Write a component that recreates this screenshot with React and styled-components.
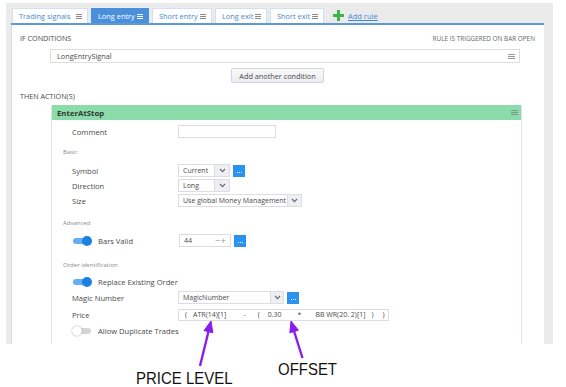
import styled, { createGlobalStyle } from 'styled-components';

const GlobalStyle = createGlobalStyle`
  html, body {
    margin: 0;
    background: #fff;
  }
  body {
    font-family: "Open Sans", "Noto Sans", sans-serif;
    font-weight: 400;
    color: #4a4a4a;
  }
`;

const Page = styled.div`
  position: relative;
  width: 566px;
  height: 387px;
  overflow: hidden;
`;

const Frame = styled.div`
  margin: 3px 0 0 6px;
  width: 547px;
  height: 341px;
  background: #ebebeb;
  padding: 5px 9px 0 5px;
  box-sizing: border-box;
  display: flex;
  flex-direction: column;
  overflow: hidden;
`;

const TabBar = styled.div`
  display: flex;
  align-items: stretch;
  gap: 3px;
  height: 15px;
  padding-left: 1px;
  border-bottom: 2px solid #5d9ad6;
`;

const Tab = styled.div`
  display: flex;
  align-items: center;
  padding: 0 5px 0 6px;
  font-size: 7.4px;
  background: ${p => (p.$active ? '#4a8fdc' : '#fff')};
  color: ${p => (p.$active ? '#fff' : '#4a87cc')};
  border: 1px solid ${p => (p.$active ? '#4a8fdc' : '#cfe0f1')};
  border-bottom: none;
  box-sizing: border-box;
  width: ${p => p.$w}px;
  white-space: nowrap;
`;

const Burger = styled.span`
  display: inline-block;
  flex-shrink: 0;
  width: ${p => p.$w || 6}px;
  height: 5px;
  margin-left: auto;
  background: linear-gradient(
    ${p => p.$c || '#888'} 0 1px,
    transparent 1px 2px,
    ${p => p.$c || '#888'} 2px 3px,
    transparent 3px 4px,
    ${p => p.$c || '#888'} 4px 5px
  );
`;

const AddRule = styled.div`
  display: flex;
  align-items: center;
  gap: 4px;
  margin-left: 6px;
  font-size: 7.5px;
  color: #3f86d6;
  text-decoration: underline;
`;

const Panel = styled.div`
  flex: 1;
  background: #fff;
  border-left: 1px solid #dcdcdc;
  padding: 8px 9px 0 8px;
  display: flex;
  flex-direction: column;
  overflow: hidden;
`;

const HeadRow = styled.div`
  display: flex;
  justify-content: space-between;
  align-items: center;
  height: 10px;
  margin-top: ${p => p.$mt || 0}px;
  font-size: 7.2px;
`;

const Note = styled.span`
  font-size: 6.4px;
  color: #666;
`;

const ConditionBox = styled.div`
  margin: 6px 0 0 30px;
  width: 470px;
  height: 14px;
  box-sizing: border-box;
  border: 1px solid #dedede;
  display: flex;
  align-items: center;
  padding: 0 4px 0 6px;
  font-size: 7.3px;
`;

const AddButton = styled.button`
  align-self: center;
  margin-top: 5px;
  height: 15px;
  width: 93px;
  padding: 0;
  font-family: inherit;
  font-weight: 400;
  font-size: 7.3px;
  color: #4a4a4a;
  background: linear-gradient(#fafafa, #ececf2);
  border: 1px solid #d4d4dc;
  border-radius: 2px;
`;

const ActionBox = styled.div`
  margin: 4px 0 0 31px;
  width: 469px;
  flex: 1;
  border-left: 1px solid #e2e2ee;
  border-right: 1px solid #e2e2ee;
  display: flex;
  flex-direction: column;
`;

const ActionHeader = styled.div`
  height: 15px;
  background: #8cdca9;
  display: flex;
  align-items: center;
  padding: 0 3px 0 5px;
  font-size: 7.8px;
  font-weight: 700;
  color: #2e3a33;
`;

const ActionBody = styled.div`
  padding-left: 20px;
  display: flex;
  flex-direction: column;
`;

const Section = styled.div`
  margin: ${p => p.$mt}px 0 0 -9px;
  height: 10px;
  line-height: 10px;
  font-size: 6px;
  color: #8a8a8a;
`;

const Row = styled.div`
  display: flex;
  align-items: center;
  height: ${p => p.$h || 13}px;
  margin-top: ${p => p.$mt || 0}px;
`;

const Label = styled.span`
  width: 106px;
  flex-shrink: 0;
  font-size: 7.6px;
`;

const ToggleLabel = styled.span`
  display: flex;
  align-items: center;
  gap: 7px;
  width: ${p => (p.$wide ? 'auto' : '106px')};
  flex-shrink: 0;
  padding-left: 1px;
  font-size: 7.6px;
`;

const Toggle = styled.span`
  position: relative;
  width: 18px;
  height: 6px;
  border-radius: 3px;
  background: ${p => (p.$on ? '#66aef4' : '#d6d6d6')};
  &::after {
    content: '';
    position: absolute;
    top: -2px;
    left: ${p => (p.$on ? '9px' : '-1px')};
    width: 10px;
    height: 10px;
    border-radius: 50%;
    background: ${p => (p.$on ? '#1b80e2' : '#fff')};
    box-shadow: ${p => (p.$on ? 'none' : '0 0 1.5px rgba(0,0,0,0.45)')};
  }
`;

const Field = styled.div`
  display: flex;
  align-items: center;
  width: ${p => p.$w}px;
  height: ${p => p.$h || 13}px;
  box-sizing: border-box;
  border: 1px solid #dcdce2;
  background: #fff;
  font-size: 7px;
  padding-left: ${p => p.$pl ?? 4}px;
  overflow: hidden;
  white-space: nowrap;
`;

const FieldText = styled.span`
  flex: 1;
  overflow: hidden;
`;

const Arrow = styled.span`
  display: flex;
  flex-shrink: 0;
  align-items: center;
  justify-content: center;
  align-self: stretch;
  width: ${p => p.$w || 14}px;
  background: #eeeef5;
  border-left: 1px solid #dcdce2;
`;

const Stepper = styled.span`
  color: #9a9a9a;
  font-size: 9px;
  letter-spacing: 1px;
  margin-right: 3px;
`;

const DotsButton = styled.span`
  display: flex;
  align-items: flex-end;
  justify-content: center;
  gap: 1px;
  width: 12px;
  height: 12px;
  margin-left: 3px;
  padding-bottom: 4px;
  box-sizing: border-box;
  background: #2a93f2;
`;

const Dot = styled.i`
  width: 1px;
  height: 1px;
  background: #fff;
`;

const Expr = styled.span`
  margin-left: ${p => p.$ml}px;
`;

const Notes = styled.div`
  display: flex;
  align-items: flex-start;
  padding-left: 136px;
  font-family: "Liberation Sans", Arial, sans-serif;
  color: #111;
`;

const Callout = styled.span`
  display: inline-block;
  margin-top: ${p => p.$mt}px;
  margin-left: ${p => p.$ml || 0}px;
  font-size: 17px;
  line-height: 17px;
  transform: scaleX(0.88);
  transform-origin: left center;
  white-space: nowrap;
`;

const Overlay = styled.svg`
  position: absolute;
  left: 0;
  top: 0;
  pointer-events: none;
`;

const Chevron = () => (
  <svg width="7" height="5" viewBox="0 0 7 5">
    <path d="M1 1 L3.5 3.6 L6 1" fill="none" stroke="#666" strokeWidth="1.1" />
  </svg>
);

const Plus = () => (
  <svg width="11" height="11" viewBox="0 0 11 11">
    <path d="M4 0h3v4h4v3H7v4H4V7H0V4h4z" fill="#3cb54a" />
  </svg>
);

const Dots = () => (
  <DotsButton>
    <Dot />
    <Dot />
    <Dot />
  </DotsButton>
);

const tabs = [
  { name: 'Trading signals', w: 76 },
  { name: 'Long entry', w: 58, active: true },
  { name: 'Short entry', w: 60 },
  { name: 'Long exit', w: 52 },
  { name: 'Short exit', w: 54 },
];

export default function App() {
  return (
    <Page>
      <GlobalStyle />
      <Frame>
        <TabBar>
          {tabs.map(t => (
            <Tab key={t.name} $active={t.active} $w={t.w}>
              {t.name}
              <Burger $c={t.active ? '#fff' : '#8a8a8a'} />
            </Tab>
          ))}
          <AddRule>
            <Plus />
            Add rule
          </AddRule>
        </TabBar>
        <Panel>
          <HeadRow>
            IF CONDITIONS
            <Note>RULE IS TRIGGERED ON BAR OPEN</Note>
          </HeadRow>
          <ConditionBox>
            <FieldText>LongEntrySignal</FieldText>
            <Burger $w={7} $c="#999" />
          </ConditionBox>
          <AddButton>Add another condition</AddButton>
          <HeadRow $mt={8}>THEN ACTION(S)</HeadRow>
          <ActionBox>
            <ActionHeader>
              EnterAtStop
              <Burger $w={7} $c="#7d9a88" />
            </ActionHeader>
            <ActionBody>
              <Row $mt={5}>
                <Label>Comment</Label>
                <Field $w={98} />
              </Row>
              <Section $mt={9}>Basic</Section>
              <Row $mt={7}>
                <Label>Symbol</Label>
                <Field $w={52}>
                  <FieldText>Current</FieldText>
                  <Arrow><Chevron /></Arrow>
                </Field>
                <Dots />
              </Row>
              <Row $mt={2}>
                <Label>Direction</Label>
                <Field $w={52}>
                  <FieldText>Long</FieldText>
                  <Arrow><Chevron /></Arrow>
                </Field>
              </Row>
              <Row $mt={2}>
                <Label>Size</Label>
                <Field $w={124}>
                  <FieldText>Use global Money Management</FieldText>
                  <Arrow $w={13}><Chevron /></Arrow>
                </Field>
              </Row>
              <Section $mt={11}>Advanced</Section>
              <Row $mt={6}>
                <ToggleLabel>
                  <Toggle $on />
                  Bars Valid
                </ToggleLabel>
                <Field $w={52}>
                  <FieldText>44</FieldText>
                  <Stepper>−+</Stepper>
                </Field>
                <Dots />
              </Row>
              <Section $mt={13}>Order identification</Section>
              <Row $mt={5}>
                <ToggleLabel $wide>
                  <Toggle $on />
                  Replace Existing Order
                </ToggleLabel>
              </Row>
              <Row $mt={3}>
                <Label>Magic Number</Label>
                <Field $w={106}>
                  <FieldText>MagicNumber</FieldText>
                  <Arrow $w={12}><Chevron /></Arrow>
                </Field>
                <Dots />
              </Row>
              <Row $mt={4}>
                <Label>Price</Label>
                <Field $w={211} $h={12} $pl={0}>
                  <Expr $ml={6}>(</Expr>
                  <Expr $ml={6}>ATR(14)[1]</Expr>
                  <Expr $ml={17}>-</Expr>
                  <Expr $ml={12}>(</Expr>
                  <Expr $ml={8}>0.30</Expr>
                  <Expr $ml={16}>*</Expr>
                  <Expr $ml={14}>BB WR(20. 2)[1]</Expr>
                  <Expr $ml={6}>)</Expr>
                  <Expr $ml={9}>)</Expr>
                </Field>
              </Row>
              <Row $mt={3}>
                <ToggleLabel $wide>
                  <Toggle />
                  Allow Duplicate Trades
                </ToggleLabel>
              </Row>
            </ActionBody>
          </ActionBox>
        </Panel>
      </Frame>
      <Notes>
        <Callout $mt={26}>PRICE LEVEL</Callout>
        <Callout $mt={17} $ml={32}>OFFSET</Callout>
      </Notes>
      <Overlay width="566" height="387" viewBox="0 0 566 387">
        <g fill="#8b1cf0" stroke="#8b1cf0">
          <line x1="200" y1="366" x2="208.6" y2="331" strokeWidth="2.4" />
          <polygon points="211,321 212.8,332.8 204,330.6" strokeWidth="1" />
          <line x1="302.5" y1="358" x2="294" y2="331" strokeWidth="2.4" />
          <polygon points="291,321 298.4,330.2 289.8,332.8" strokeWidth="1" />
        </g>
      </Overlay>
    </Page>
  );
}
